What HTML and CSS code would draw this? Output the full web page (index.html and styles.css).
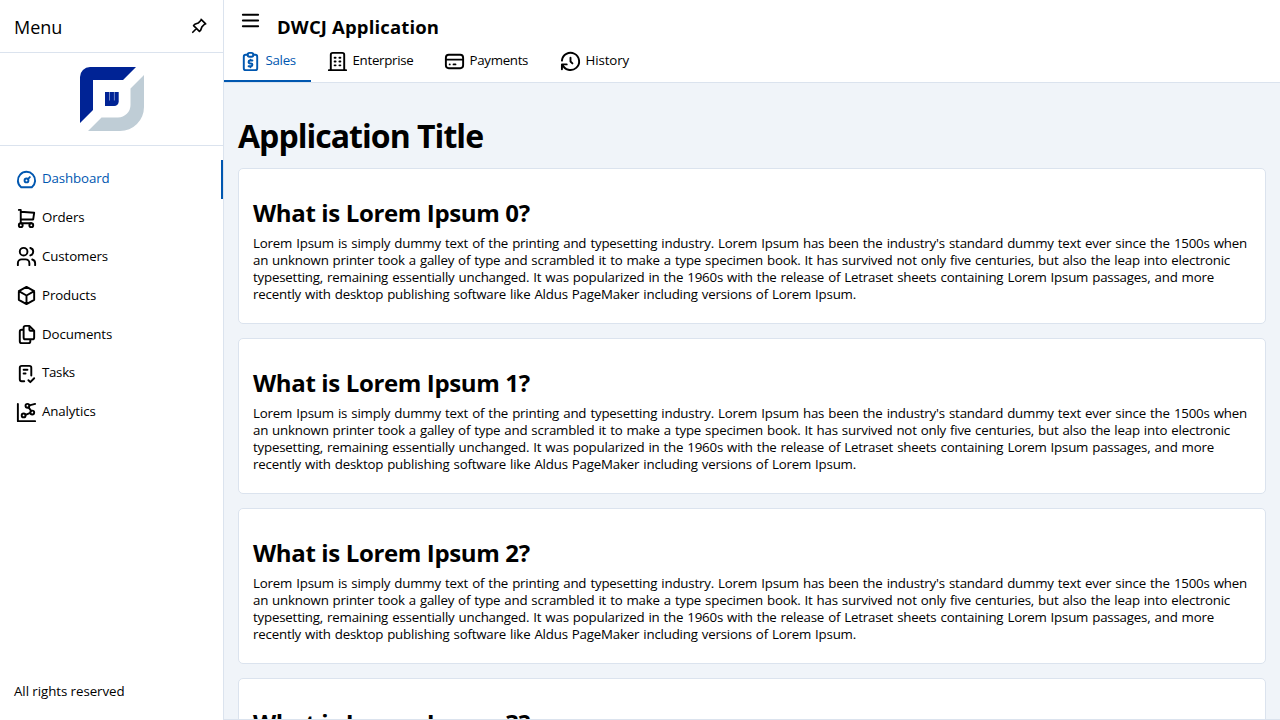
FILE: index.html
```html
<!DOCTYPE html>
<html lang="en">
<head>
<meta charset="utf-8">
<title>DWCJ Application</title>
<link rel="stylesheet" href="styles.css">
</head>
<body>
<div class="app">
  <aside class="drawer">
    <header class="drawer-head">
      <span class="drawer-title">Menu</span>
      <svg class="pin" viewBox="0 0 24 24"><path d="M15 4.5l-4 4l-4 1.5l-1.5 1.5l7 7l1.5 -1.5l1.5 -4l4 -4M9 15l-4.5 4.5M14.5 4l5.5 5.5"/></svg>
    </header>
    <div class="brand">
      <svg class="logo" viewBox="0 0 64 64"><path class="navy" d="M0 56V10A10 10 0 0 1 10 0H56L43 13H13V43Z"/><path class="silver" d="M64 8V40A24 24 0 0 1 40 64H8L21.500 50.500H38A12.500 12.500 0 0 0 50.500 38V21.500Z"/><path class="navy" d="M25 25h13.700v9.500a4.500 4.500 0 0 1-4.500 4.500H25z"/><path class="slit" d="M29.500 25v8.500M34.400 25v8.500"/></svg>
    </div>
    <nav class="menu">
      <a class="item active"><svg class="icon" viewBox="0 0 24 24"><circle cx="12" cy="13" r="2"/><path d="M13.450 11.550l2.050-2.050M6.400 20a9 9 0 1 1 11.200 0z"/></svg><span>Dashboard</span></a>
      <a class="item"><svg class="icon" viewBox="0 0 24 24"><circle cx="6" cy="19" r="2"/><circle cx="17" cy="19" r="2"/><path d="M17 17h-11v-14h-2M6 5l14 1l-1 7h-13"/></svg><span>Orders</span></a>
      <a class="item"><svg class="icon" viewBox="0 0 24 24"><circle cx="9" cy="7" r="4"/><path d="M3 21v-2a4 4 0 0 1 4-4h4a4 4 0 0 1 4 4v2M16 3.130a4 4 0 0 1 0 7.750M21 21v-2a4 4 0 0 0-3-3.850"/></svg><span>Customers</span></a>
      <a class="item"><svg class="icon" viewBox="0 0 24 24"><path d="M12 3l8 4.500v9l-8 4.500l-8-4.500v-9zM12 12l8-4.500M12 12v9M12 12l-8-4.500"/></svg><span>Products</span></a>
      <a class="item"><svg class="icon" viewBox="0 0 24 24"><path d="M15 3v4a1 1 0 0 0 1 1h4M18 17h-7a2 2 0 0 1-2-2v-10a2 2 0 0 1 2-2h4l5 5v7a2 2 0 0 1-2 2zM16 17v2a2 2 0 0 1-2 2h-7a2 2 0 0 1-2-2v-10a2 2 0 0 1 2-2h2"/></svg><span>Documents</span></a>
      <a class="item"><svg class="icon" viewBox="0 0 24 24"><path d="M9.615 20h-2.615a2 2 0 0 1-2-2v-12a2 2 0 0 1 2-2h8a2 2 0 0 1 2 2v8M14 19l2 2l4-4M9 8h4M9 12h2"/></svg><span class="tight">Tasks</span></a>
      <a class="item"><svg class="icon" viewBox="0 0 24 24"><circle cx="9" cy="15" r="2"/><circle cx="13" cy="5" r="2"/><circle cx="18" cy="12" r="2"/><path d="M3 3v18h18M21 3l-6 1.500M14.113 6.650l2.771 3.695M16 12.500l-5 2"/></svg><span>Analytics</span></a>
    </nav>
    <footer class="drawer-foot"><span>All rights reserved</span></footer>
  </aside>
  <div class="page">
    <header class="toolbar">
      <div class="bar">
        <svg class="burger" viewBox="0 0 24 24"><path d="M4 6h16M4 12h16M4 18h16"/></svg>
        <h3 class="app-name">DWCJ Application</h3>
      </div>
      <nav class="tabs">
        <a class="tab t-sales active"><svg class="icon" viewBox="0 0 24 24"><path d="M9 5h-2a2 2 0 0 0-2 2v12a2 2 0 0 0 2 2h10a2 2 0 0 0 2-2v-12a2 2 0 0 0-2-2h-2"/><rect x="9" y="3" width="6" height="4" rx="2"/><path d="M14 11h-2.500a1.500 1.500 0 0 0 0 3h1a1.500 1.500 0 0 1 0 3h-2.500M12 17v1m0-8v1"/></svg><span class="tight">Sales</span></a>
        <a class="tab t-enterprise"><svg class="icon" viewBox="0 0 24 24"><path d="M3 21h18M9 8h1M9 12h1M9 16h1M14 8h1M14 12h1M14 16h1M5 21v-16a2 2 0 0 1 2-2h10a2 2 0 0 1 2 2v16"/></svg><span class="tight">Enterprise</span></a>
        <a class="tab t-payments"><svg class="icon" viewBox="0 0 24 24"><rect x="3" y="5" width="18" height="14" rx="3"/><path d="M3 10h18M7 15h.010M11 15h2"/></svg><span class="tight">Payments</span></a>
        <a class="tab"><svg class="icon" viewBox="0 0 24 24"><path d="M12 8v4l2 2M3.050 11a9 9 0 1 1 .500 4m-.500 5v-5h5"/></svg><span>History</span></a>
      </nav>
    </header>
    <main class="content">
      <h1 class="title"><span>Application Title</span></h1>
      <section class="card">
        <h2 class="card-title">What is Lorem Ipsum 0?</h2>
        <p class="text"><span class="line a">Lorem Ipsum is simply dummy text of the printing and typesetting industry. Lorem Ipsum has been the industry's standard dummy text ever since the 1500s when</span> <span class="line b">an unknown printer took a galley of type and scrambled it to make a type specimen book. It has survived not only five centuries, but also the leap into electronic</span> <span class="line c">typesetting, remaining essentially unchanged. It was popularized in the 1960s with the release of Letraset sheets containing Lorem Ipsum passages, and more</span> <span class="line d">recently with desktop publishing software like Aldus PageMaker including versions of Lorem Ipsum.</span></p>
      </section>
      <section class="card">
        <h2 class="card-title">What is Lorem Ipsum 1?</h2>
        <p class="text"><span class="line a">Lorem Ipsum is simply dummy text of the printing and typesetting industry. Lorem Ipsum has been the industry's standard dummy text ever since the 1500s when</span> <span class="line b">an unknown printer took a galley of type and scrambled it to make a type specimen book. It has survived not only five centuries, but also the leap into electronic</span> <span class="line c">typesetting, remaining essentially unchanged. It was popularized in the 1960s with the release of Letraset sheets containing Lorem Ipsum passages, and more</span> <span class="line d">recently with desktop publishing software like Aldus PageMaker including versions of Lorem Ipsum.</span></p>
      </section>
      <section class="card">
        <h2 class="card-title">What is Lorem Ipsum 2?</h2>
        <p class="text"><span class="line a">Lorem Ipsum is simply dummy text of the printing and typesetting industry. Lorem Ipsum has been the industry's standard dummy text ever since the 1500s when</span> <span class="line b">an unknown printer took a galley of type and scrambled it to make a type specimen book. It has survived not only five centuries, but also the leap into electronic</span> <span class="line c">typesetting, remaining essentially unchanged. It was popularized in the 1960s with the release of Letraset sheets containing Lorem Ipsum passages, and more</span> <span class="line d">recently with desktop publishing software like Aldus PageMaker including versions of Lorem Ipsum.</span></p>
      </section>
      <section class="card">
        <h2 class="card-title">What is Lorem Ipsum 3?</h2>
      </section>
    </main>
  </div>
</div>
</body>
</html>
```
FILE: styles.css
```css
* { box-sizing: border-box; }
body { margin: 0; font-family: "Segoe UI", "Open Sans", "Noto Sans", sans-serif; font-size: 13.3px; color: #000; }
h1, h2, h3, p { margin: 0; }
svg { display: block; flex: none; fill: none; stroke: currentColor; stroke-width: 2; stroke-linecap: round; stroke-linejoin: round; }
.app { display: flex; width: 1280px; height: 720px; overflow: hidden; background: #fff; }

.drawer { width: 224px; height: 720px; flex: none; display: flex; flex-direction: column; border-right: 1px solid #dbe3ee; }
.drawer-head { height: 53px; flex: none; display: flex; align-items: center; justify-content: space-between; padding: 0 14px; border-bottom: 1px solid #dbe3ee; }
.drawer-title { font-size: 18px; padding-top: 2px; }
.pin { width: 20px; height: 20px; }
.brand { height: 93px; flex: none; display: flex; justify-content: center; padding-top: 14px; border-bottom: 1px solid #dbe3ee; }
.logo { width: 64px; height: 64px; stroke: none; }
.navy { fill: #002395; }
.silver { fill: #bfcdd6; }
.slit { stroke: #8f9fd2; stroke-width: 0.8; stroke-linecap: butt; }
.menu { flex: 1; padding-top: 14px; }
.item { height: 38.8px; display: flex; align-items: center; gap: 4px; padding-left: 15px; border-right: 2px solid transparent; }
.item span { margin-top: -2px; letter-spacing: -0.12px; }
.icon { width: 23px; height: 23px; }
.active { color: #0057b0; }
.item.active { border-right-color: #0057b0; }
.drawer-foot { padding: 0 14px 2px; height: 57px; display: flex; align-items: center; letter-spacing: -0.06px; }

.page { flex: 1; min-width: 0; display: flex; flex-direction: column; border-bottom: 1px solid #dbe3ee; }
.toolbar { height: 83px; flex: none; background: #fff; border-bottom: 1px solid #dbe3ee; }
.bar { height: 41px; display: flex; align-items: flex-start; gap: 16px; padding: 9px 0 0 15px; }
.burger { width: 23px; height: 23px; }
.app-name { font-size: 18.5px; line-height: 24px; padding-top: 6px; font-weight: 700; letter-spacing: 0.15px; margin-left: -1px; white-space: nowrap; }
.tabs { display: flex; height: 41px; }
.tab { display: flex; align-items: center; gap: 4px; padding-left: 15px; border-bottom: 2px solid transparent; }
.tab .icon { margin-top: 2px; }
.tab span { margin-top: -2px; margin-left: -0.5px; letter-spacing: -0.1px; }
.tab.active { border-bottom-color: #0057b0; }
.item .tight, .tab .tight { letter-spacing: -0.3px; }
.t-sales { width: 87px; }
.t-enterprise { width: 117px; }
.t-payments { width: 116px; }

.content { flex: 1; min-height: 0; overflow: hidden; padding: 30px 14px 0; background: #f0f4f9; display: flex; flex-direction: column; }
.title { height: 55px; flex: none; line-height: 45px; font-size: 32px; font-weight: 700; letter-spacing: -0.97px; }
.card { height: 156px; flex: none; margin-bottom: 14px; padding: 27px 14px 0; background: #fff; border: 1px solid #dbe3ee; border-radius: 5px; }
.card-title { font-size: 24px; line-height: 34px; font-weight: 700; letter-spacing: -0.36px; white-space: nowrap; }
.text { padding-top: 5px; line-height: 17px; }
.line { display: block; white-space: nowrap; text-align-last: justify; letter-spacing: -0.2px; }
.a { width: 994px; }
.b { width: 977px; }
.c { width: 961px; }
.d { width: 603px; }
```
